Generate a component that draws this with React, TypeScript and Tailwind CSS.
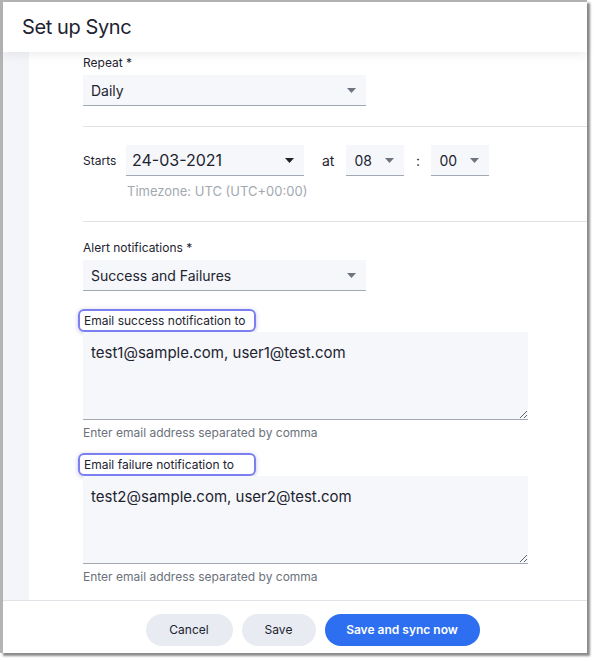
import { useState } from "react";

const font = { fontFamily: "Inter, 'Liberation Sans', Arial, sans-serif" };

function Caret({ dark = false }: { dark?: boolean }) {
  return (
    <svg width="9" height="5" viewBox="0 0 9 5" className="shrink-0">
      <path d="M0 0h9L4.5 5z" fill={dark ? "#1f2329" : "#6e7580"} />
    </svg>
  );
}

function Select({ value, width, className = "" }: { value: string; width: string; className?: string }) {
  return (
    <div
      className={`flex items-center justify-between h-[31px] bg-[#f5f7fa] border-b border-[#a2a8b1] pl-[8px] pr-[10px] text-[14px] text-[#1d2330] ${width} ${className}`}
    >
      <span>{value}</span>
      <Caret />
    </div>
  );
}

function EmailField({ label, value }: { label: string; value: string }) {
  const [text, setText] = useState(value);
  return (
    <div className="flex flex-col">
      <div className="-ml-[5px] w-[178px] h-[23px] flex items-center px-[4px] border-2 border-[#7b7ff2] rounded-[6px] shadow-[0_1px_4px_rgba(80,80,160,0.35)] text-[12px] text-[#1d2330]">
        {label}
      </div>
      <textarea
        value={text}
        onChange={(e) => setText(e.target.value)}
        className="w-[445px] h-[88px] bg-[#f5f7fa] border-b border-[#a2a8b1] px-[8px] pt-[10px] text-[15px] text-[#1d2330] outline-none"
        style={font}
      />
      <p className="mt-[5px] text-[12px] leading-[16px] text-[#6b717b]">Enter email address separated by comma</p>
    </div>
  );
}

export default function App() {
  return (
    <div className="w-[594px] h-[662px] bg-white" style={font}>
      <div className="w-[587px] h-[653px] flex flex-col bg-white border-l-[3px] border-t-2 border-[#b4b4b4] shadow-[3px_3px_2px_rgba(0,0,0,0.45)]">
        {/* Header */}
        <div className="relative z-10 h-[50px] shrink-0 flex items-center px-[19px] bg-white shadow-[0_3px_10px_rgba(0,0,0,0.07)]">
          <h1 className="text-[20px] text-[#1d2330] tracking-[-0.4px]">Set up Sync</h1>
        </div>

        {/* Body */}
        <div className="flex flex-1 min-h-0">
          <div className="w-[26px] shrink-0 bg-[#f3f5f8]" />
          <div className="flex-1 pl-[54px] pt-[3px] flex flex-col">
            <label className="text-[12px] leading-[16px] text-[#1d2330] mb-[4px]">Repeat *</label>
            <Select value="Daily" width="w-[283px]" />

            <div className="mt-[20px] border-t border-[#dfe3e8]" />

            <div className="mt-[18px] flex items-center">
              <span className="text-[12px] text-[#1d2330] w-[43px]">Starts</span>
              <div className="flex items-center justify-between w-[178px] h-[31px] bg-[#f5f7fa] border-b border-[#a2a8b1] pl-[6px] pr-[10px] text-[16px] text-[#1d2330]">
                <span>24-03-2021</span>
                <Caret dark />
              </div>
              <span className="ml-[18px] mr-[12px] text-[14px] text-[#1d2330]">at</span>
              <div className="flex items-center justify-between w-[58px] h-[31px] bg-[#f5f7fa] border-b border-[#a2a8b1] pl-[8px] pr-[10px] text-[14px] text-[#1d2330]">
                <span>08</span>
                <Caret />
              </div>
              <span className="w-[27px] text-center text-[14px] text-[#1d2330]">:</span>
              <div className="flex items-center justify-between w-[58px] h-[31px] bg-[#f5f7fa] border-b border-[#a2a8b1] pl-[8px] pr-[10px] text-[14px] text-[#1d2330]">
                <span>00</span>
                <Caret />
              </div>
            </div>
            <p className="mt-[7px] ml-[44px] text-[13px] leading-[16px] text-[#a3a9b1]">Timezone: UTC (UTC+00:00)</p>

            <div className="mt-[22px] border-t border-[#dfe3e8]" />

            <label className="mt-[18px] text-[12px] leading-[16px] text-[#1d2330] mb-[4px]">Alert notifications *</label>
            <Select value="Success and Failures" width="w-[283px]" />

            <div className="mt-[18px]">
              <EmailField label="Email success notification to" value="test1@sample.com, user1@test.com" />
            </div>
            <div className="mt-[12px]">
              <EmailField label="Email failure notification to" value="test2@sample.com, user2@test.com" />
            </div>
          </div>
        </div>

        {/* Footer */}
        <div className="h-[53px] shrink-0 border-t border-[#dfe3e8] flex items-start justify-center gap-[9px] pl-[35px] pt-[13px]">
          <button className="h-[32px] w-[87px] rounded-full bg-[#e8ebf2] text-[12px] text-[#1d2330]">Cancel</button>
          <button className="h-[32px] w-[74px] rounded-full bg-[#e8ebf2] text-[12px] text-[#1d2330]">Save</button>
          <button className="h-[32px] w-[155px] rounded-full bg-[#2d6ff0] text-[12px] font-semibold text-white">
            Save and sync now
          </button>
        </div>
      </div>
    </div>
  );
}
